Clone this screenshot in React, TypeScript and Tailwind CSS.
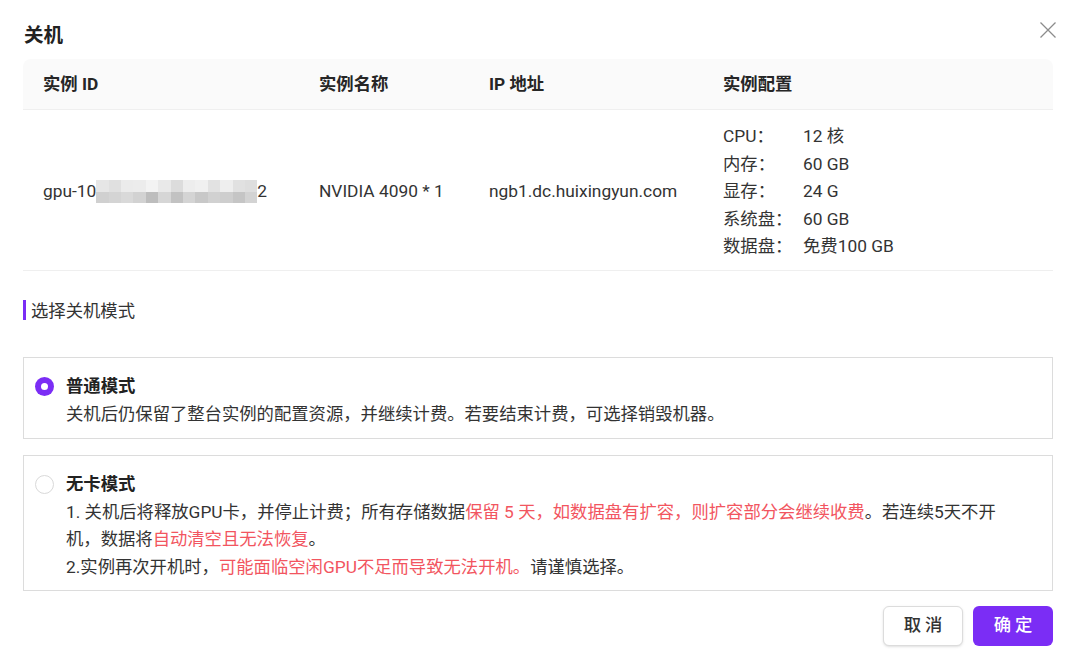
const pixelTop = ["#e6e6e6", "#e0e0e0", "#ebebeb", "#ececec", "#f3f3f3", "#e9e9e9", "#dcdcdc", "#ededed", "#f0f0f0", "#e2e2e2", "#eeeeee", "#e1e1e1", "#dedede"];
const pixelBottom = ["#d0d0d0", "#d4d4d4", "#d9d9d9", "#d2d2d2", "#bdbdbd", "#d6d6d6", "#c2c2c2", "#d4d4d4", "#c8c8c8", "#d1d1d1", "#cecece", "#c5c5c5", "#d3d3d3"];

const config = [
  { label: "CPU：", value: "12 核" },
  { label: "内存：", value: "60 GB" },
  { label: "显存：", value: "24 G" },
  { label: "系统盘：", value: "60 GB" },
  { label: "数据盘：", value: "免费100 GB" },
];

const Blurred = () => (
  <span className="inline-flex flex-col w-[161px] h-[23px] align-middle">
    {[pixelTop, pixelBottom].map((row, i) => (
      <span key={i} className="flex flex-1">
        {row.map((c, j) => (
          <span key={j} className="flex-1" style={{ backgroundColor: c }} />
        ))}
      </span>
    ))}
  </span>
);

const Radio = ({ checked }: { checked?: boolean }) =>
  checked ? (
    <span className="w-[19px] h-[19px] rounded-full bg-[#7b2df5] flex items-center justify-center shrink-0">
      <span className="w-[7px] h-[7px] rounded-full bg-white" />
    </span>
  ) : (
    <span className="w-[19px] h-[19px] rounded-full border border-[#d9d9d9] bg-white shrink-0" />
  );

export default function App() {
  return (
    <div className="w-[1076px] h-[665px] bg-white text-[#333] text-[17.33px] font-['Roboto','Noto_Sans_CJK_SC',sans-serif] px-[23px] pt-[22px] relative">
      {/* title */}
      <div className="flex items-center justify-between">
        <h1 className="text-[19.5px] leading-[26px] font-bold pl-px pt-px -mb-px text-[#222]">关机</h1>
        <button className="absolute right-[20px] top-[22px] text-[#8c8c8c]">
          <svg width="16" height="16" viewBox="0 0 16 16" fill="none" stroke="currentColor" strokeWidth="1.3">
            <path d="M0.5 0.5L15.5 15.5M15.5 0.5L0.5 15.5" />
          </svg>
        </button>
      </div>

      {/* table */}
      <div className="mt-[11px]">
        <div className="grid grid-cols-[276px_170px_234px_1fr] h-[51px] pt-[2px] items-center bg-[#fafafa] rounded-t-lg border-b border-[#efefef] font-bold text-[#262626]">
          <div className="pl-5">实例 ID</div>
          <div className="pl-5">实例名称</div>
          <div className="pl-5">IP 地址</div>
          <div className="pl-5">实例配置</div>
        </div>
        <div className="grid grid-cols-[276px_170px_234px_1fr] h-[161px] pt-[4px] items-center border-b border-[#efefef]">
          <div className="pl-5 flex items-center">
            <span>gpu-10</span>
            <Blurred />
            <span>2</span>
          </div>
          <div className="pl-5">NVIDIA 4090 * 1</div>
          <div className="pl-5">ngb1.dc.huixingyun.com</div>
          <div className="pl-5 flex flex-col">
            {config.map((c) => (
              <div key={c.label} className="flex leading-[27.5px]">
                <span className="w-[80px]">{c.label}</span>
                <span>{c.value}</span>
              </div>
            ))}
          </div>
        </div>
      </div>

      {/* section title */}
      <div className="mt-[29px] flex items-center h-[20px]">
        <span className="w-[3px] h-[20px] bg-[#7b2df5]" />
        <span className="ml-[5px] leading-[20px] pt-[2px]">选择关机模式</span>
      </div>

      {/* options */}
      <div className="mt-[37px] flex flex-col gap-4">
        <div className="border border-[#dcdcdc] h-[82px] pl-[11px] pt-[14px] flex gap-[12px]">
          <div className="h-[28px] flex items-center">
            <Radio checked />
          </div>
          <div className="leading-[28px]">
            <div className="font-bold text-[#222]">普通模式</div>
            <div>关机后仍保留了整台实例的配置资源，并继续计费。若要结束计费，可选择销毁机器。</div>
          </div>
        </div>

        <div className="border border-[#dcdcdc] h-[136px] pl-[11px] pt-[14px] flex gap-[12px]">
          <div className="h-[28px] flex items-center">
            <Radio />
          </div>
          <div className="leading-[27.7px] pt-px">
            <div className="font-bold text-[#222]">无卡模式</div>
            <div className="whitespace-nowrap">
              1. 关机后将释放GPU卡，并停止计费；所有存储数据
              <span className="text-[#f25560]">保留 5 天，如数据盘有扩容，则扩容部分会继续收费</span>
              。若连续5天不开
            </div>
            <div className="whitespace-nowrap">
              机，数据将<span className="text-[#f25560]">自动清空且无法恢复</span>。
            </div>
            <div className="whitespace-nowrap">
              2.实例再次开机时，<span className="text-[#f25560]">可能面临空闲GPU不足而导致无法开机。</span>请谨慎选择。
            </div>
          </div>
        </div>
      </div>

      {/* footer */}
      <div className="mt-[15px] flex justify-end gap-[10px]">
        <button className="w-[80px] h-[40px] rounded-md border border-[#dcdcdc] bg-white shadow-sm tracking-[4px] pl-[4px] font-medium text-[#333]">
          取消
        </button>
        <button className="w-[80px] h-[40px] rounded-md bg-[#7b2df5] text-white tracking-[4px] pl-[4px] font-medium">
          确定
        </button>
      </div>
    </div>
  );
}
